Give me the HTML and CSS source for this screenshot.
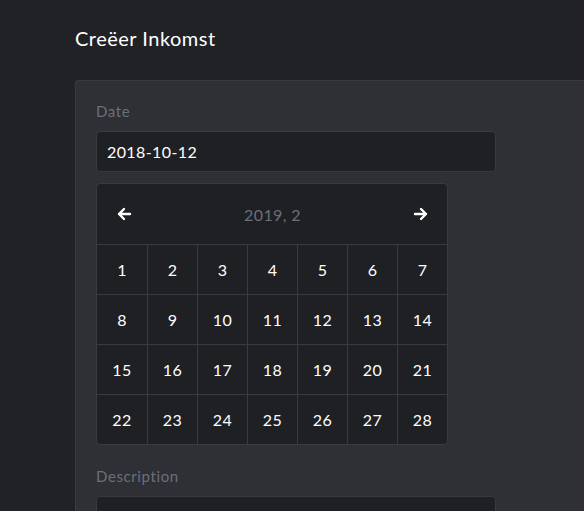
FILE: index.html
```html
<!DOCTYPE html>
<html lang="nl">
<head>
<meta charset="utf-8">
<title>Creëer Inkomst</title>
<link rel="stylesheet" href="styles.css">
</head>
<body>
<main class="page">
  <h1 class="title">Creëer Inkomst</h1>
  <section class="card">
    <label class="label">Date</label>
    <div class="input">2018-10-12</div>
    <div class="calendar">
      <div class="cal-head">
        <button class="nav" aria-label="previous">
          <svg width="16" height="16" viewBox="0 0 16 16"><path d="M14 8H3M8 3L3 8l5 5" fill="none" stroke="#fff" stroke-width="2.4" stroke-linecap="round" stroke-linejoin="round"/></svg>
        </button>
        <span class="cal-title">2019, 2</span>
        <button class="nav" aria-label="next">
          <svg width="16" height="16" viewBox="0 0 16 16"><path d="M2 8h11M8 3l5 5-5 5" fill="none" stroke="#fff" stroke-width="2.4" stroke-linecap="round" stroke-linejoin="round"/></svg>
        </button>
      </div>
      <div class="days">
        <div class="day">1</div><div class="day">2</div><div class="day">3</div><div class="day">4</div><div class="day">5</div><div class="day">6</div><div class="day">7</div>
        <div class="day">8</div><div class="day">9</div><div class="day">10</div><div class="day">11</div><div class="day">12</div><div class="day">13</div><div class="day">14</div>
        <div class="day">15</div><div class="day">16</div><div class="day">17</div><div class="day">18</div><div class="day">19</div><div class="day">20</div><div class="day">21</div>
        <div class="day">22</div><div class="day">23</div><div class="day">24</div><div class="day">25</div><div class="day">26</div><div class="day">27</div><div class="day">28</div>
      </div>
    </div>
    <label class="label label-desc">Description</label>
    <div class="input"></div>
  </section>
</main>
</body>
</html>
```

FILE: styles.css
```css
html, body {
  margin: 0;
  padding: 0;
  background: #212226;
  font-family: Lato, "Noto Sans", sans-serif;
  color: #fff;
  overflow: hidden;
}
.page {
  box-sizing: border-box;
  height: 511px;
  padding: 25px 0 0 75px;
  display: flex;
  flex-direction: column;
}
.title {
  margin: 0 0 29px;
  font-size: 20px;
  font-weight: 400;
  letter-spacing: 0.5px;
  line-height: 26px;
  color: #fff;
}
.card {
  flex: 1;
  min-height: 0;
  overflow: hidden;
  background: #2f3035;
  border: 1px solid #393a40;
  border-right: none;
  border-bottom: none;
  border-radius: 4px 0 0 0;
  padding: 20px 20px 0 20px;
}
.label {
  display: block;
  font-size: 15px;
  letter-spacing: 0.6px;
  line-height: 20px;
  color: #6c6f79;
  margin-bottom: 10px;
}
.label-desc {
  margin-top: 21px;
}
.input {
  box-sizing: border-box;
  width: 400px;
  height: 41px;
  background: #1f2024;
  border: 1px solid #393a40;
  border-radius: 4px;
  padding: 0 10px;
  font-size: 16px;
  letter-spacing: 0.4px;
  line-height: 39px;
  color: #fff;
}
.calendar {
  margin-top: 11px;
  width: 352px;
  background: #1f2024;
  border: 1px solid #393a40;
  border-radius: 4px;
  box-sizing: border-box;
  overflow: hidden;
}
.cal-head {
  height: 60px;
  display: flex;
  align-items: center;
  justify-content: space-between;
  padding: 0 18px 0 19px;
}
.nav {
  background: none;
  border: none;
  padding: 0;
  width: 16px;
  height: 16px;
  display: flex;
  cursor: pointer;
}
.cal-title {
  font-size: 16px;
  letter-spacing: 0.4px;
  color: #6c6f79;
}
.days {
  display: grid;
  grid-template-columns: repeat(7, 50px);
}
.day {
  height: 50px;
  display: flex;
  align-items: center;
  justify-content: center;
  border-top: 1px solid #393a40;
  border-left: 1px solid #393a40;
  box-sizing: border-box;
  font-size: 16px;
  letter-spacing: 0.4px;
  color: #fff;
}
.day:nth-child(7n+1) {
  border-left: none;
}
```
